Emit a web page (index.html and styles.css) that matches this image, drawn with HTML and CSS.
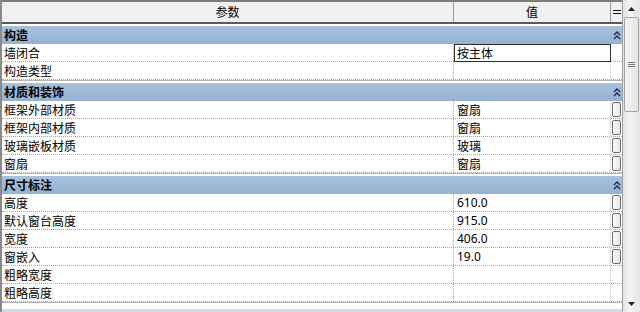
FILE: index.html
```html
<!DOCTYPE html>
<html>
<head>
<meta charset="utf-8">
<link rel="stylesheet" href="styles.css">
</head>
<body>
<div class="panel">
  <div class="grid">
    <div class="head">
      <div class="hc hc-name">参数</div>
      <div class="hc hc-val">值</div>
      <div class="hc hc-btn"><svg width="8" height="6" viewBox="0 0 8 6"><path d="M0 1.5h8M0 4.5h8" stroke="#000" stroke-width="1.2"/></svg></div>
    </div>

    <div class="group first">
      <div class="gh"><span class="gt">构造</span><span class="chev"><svg width="8" height="9" viewBox="0 0 8 9"><path d="M1 4l3-3 3 3M1 8l3-3 3 3" fill="none" stroke="#1a2a5a" stroke-width="1.4"/></svg></span></div>
      <div class="row"><div class="c-name">墙闭合</div><div class="c-val edit">按主体</div><div class="c-btn"></div></div>
      <div class="row"><div class="c-name">构造类型</div><div class="c-val"></div><div class="c-btn"></div></div>
    </div>

    <div class="group">
      <div class="gh"><span class="gt">材质和装饰</span><span class="chev"><svg width="8" height="9" viewBox="0 0 8 9"><path d="M1 4l3-3 3 3M1 8l3-3 3 3" fill="none" stroke="#1a2a5a" stroke-width="1.4"/></svg></span></div>
      <div class="row"><div class="c-name">框架外部材质</div><div class="c-val">窗扇</div><div class="c-btn"><span class="pb"></span></div></div>
      <div class="row"><div class="c-name">框架内部材质</div><div class="c-val">窗扇</div><div class="c-btn"><span class="pb"></span></div></div>
      <div class="row"><div class="c-name">玻璃嵌板材质</div><div class="c-val">玻璃</div><div class="c-btn"><span class="pb"></span></div></div>
      <div class="row"><div class="c-name">窗扇</div><div class="c-val">窗扇</div><div class="c-btn"><span class="pb"></span></div></div>
    </div>

    <div class="group">
      <div class="gh"><span class="gt">尺寸标注</span><span class="chev"><svg width="8" height="9" viewBox="0 0 8 9"><path d="M1 4l3-3 3 3M1 8l3-3 3 3" fill="none" stroke="#1a2a5a" stroke-width="1.4"/></svg></span></div>
      <div class="row"><div class="c-name">高度</div><div class="c-val num">610.0</div><div class="c-btn"><span class="pb"></span></div></div>
      <div class="row"><div class="c-name">默认窗台高度</div><div class="c-val num">915.0</div><div class="c-btn"><span class="pb"></span></div></div>
      <div class="row"><div class="c-name">宽度</div><div class="c-val num">406.0</div><div class="c-btn"><span class="pb"></span></div></div>
      <div class="row"><div class="c-name">窗嵌入</div><div class="c-val num">19.0</div><div class="c-btn"><span class="pb"></span></div></div>
      <div class="row"><div class="c-name">粗略宽度</div><div class="c-val"></div><div class="c-btn"></div></div>
      <div class="row"><div class="c-name">粗略高度</div><div class="c-val"></div><div class="c-btn"></div></div>
    </div>
    <div class="foot"></div>
  </div>

  <div class="sb">
    <div class="sb-arrow"><svg width="7" height="4" viewBox="0 0 7 4"><path d="M0 4L3.5 0 7 4z" fill="#222"/></svg></div>
    <div class="sb-thumb"><svg width="7" height="6" viewBox="0 0 7 6"><path d="M0 0.5h7M0 2.5h7M0 4.5h7" stroke="#7a7a7a" stroke-width="1"/></svg></div>
    <div class="sb-track"></div>
    <div class="sb-arrow"><svg width="7" height="4" viewBox="0 0 7 4"><path d="M0 0L3.5 4 7 0z" fill="#222"/></svg></div>
  </div>
</div>
</body>
</html>
```

FILE: styles.css
```css
* { box-sizing: border-box; }
html, body { margin: 0; padding: 0; background: #fff; }
body {
  width: 640px;
  height: 312px;
  overflow: hidden;
  font-family: "Noto Sans CJK SC", "Noto Sans", sans-serif;
  font-size: 12px;
  color: #000;
}
.panel {
  display: flex;
  width: 640px;
  height: 312px;
}
.grid {
  width: 623px;
  display: flex;
  flex-direction: column;
  border-left: 2px solid #8a8a8a;
  border-right: 1px solid #a0a0a0;
}
.head {
  display: flex;
  height: 24px;
  background: #f0f0f0;
  border-top: 2px solid #7c7c7c;
  border-bottom: 2px solid #5a5a5a;
}
.hc {
  display: flex;
  align-items: center;
  justify-content: center;
  height: 20px;
  line-height: 20px;
}
.hc-name { width: 452px; border-right: 1px solid #9a9a9a; }
.hc-val { width: 157px; border-right: 1px solid #9a9a9a; }
.hc-btn { width: 11px; }

.group { border-top: 1px solid #b4b4b4; padding-top: 2px; }
.group.first { border-top: 0; padding-top: 2px; }
.gh {
  display: flex;
  align-items: center;
  height: 18px;
  background: linear-gradient(#a9c1dc, #96b2d2);
  font-weight: bold;
}
.gt { flex: 1; padding-left: 2px; line-height: 18px; }
.chev { width: 11px; display: flex; align-items: center; justify-content: flex-start; padding-left: 2px; margin-right: 0; }

.row {
  display: flex;
  height: 18px;
  border-bottom: 1px dotted #a6a6a6;
}
.c-name {
  width: 452px;
  padding-left: 2px;
  line-height: 17px;
  border-right: 1px dotted #a6a6a6;
  white-space: nowrap;
}
.c-val {
  width: 157px;
  padding-left: 3px;
  line-height: 17px;
  border-right: 1px dotted #c8c8c8;
  white-space: nowrap;
}
.c-val.num { font-family: "Noto Sans", sans-serif; font-size: 12px; }
.c-val.edit {
  border: 1px solid #303030;
  padding-left: 2px;
  line-height: 15px;
  height: 18px;
  margin-right: 0;
}
.c-btn {
  width: 11px;
  display: flex;
  align-items: center;
  justify-content: flex-start;
  padding-left: 1px;
}
.pb {
  display: block;
  width: 9px;
  height: 15px;
  border: 1px solid #6e6e6e;
  border-radius: 2px;
  background: linear-gradient(90deg, #fbfbfb, #e6e6e6);
}
.foot {
  flex: 1;
  border-top: 1px solid #b4b4b4;
  background: #fff;
  border-bottom: 3px solid #cfdcea;
}

.sb {
  width: 17px;
  display: flex;
  flex-direction: column;
  background: linear-gradient(90deg, #e3e3e3, #f3f3f3 40%, #e6e6e6);
}
.sb-arrow {
  height: 17px;
  display: flex;
  align-items: center;
  justify-content: center;
}
.sb-thumb {
  height: 95px;
  margin: 0 1px;
  border: 1px solid #a4a4a4;
  border-radius: 2px;
  background: linear-gradient(90deg, #f2f2f2, #e6e6e6);
  display: flex;
  align-items: center;
  justify-content: center;
}
.sb-track { flex: 1; }
```
